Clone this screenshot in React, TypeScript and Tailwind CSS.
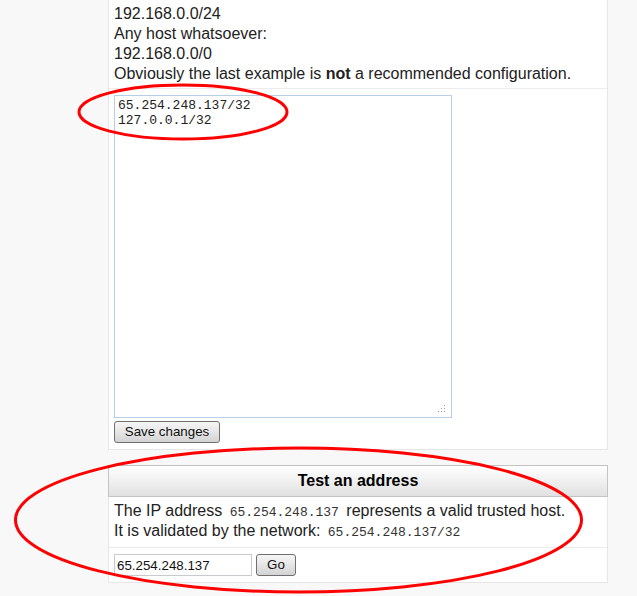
import React from "react";

const sans = "font-['Liberation_Sans',Arial,sans-serif]";
const mono = "font-['Liberation_Mono','Courier_New',monospace]";

const Btn = ({ children, className }: { children: React.ReactNode; className: string }) => (
  <button
    className={`h-[22px] rounded-[3px] border border-[#707070] bg-linear-to-b from-[#f6f6f6] via-[#e6e6e6] to-[#d3d3d3] text-[13.33px] leading-[18px] text-[#111] ${className}`}
  >
    {children}
  </button>
);

const Grip = () => (
  <svg className="absolute right-[5px] bottom-[4px]" width="9" height="9" viewBox="0 0 9 9">
    <rect x="7" y="1" width="1" height="1" fill="#9a9a9a" />
    <rect x="4" y="4" width="1" height="1" fill="#9a9a9a" />
    <rect x="7" y="4" width="1" height="1" fill="#9a9a9a" />
    <rect x="1" y="7" width="1" height="1" fill="#9a9a9a" />
    <rect x="4" y="7" width="1" height="1" fill="#9a9a9a" />
    <rect x="7" y="7" width="1" height="1" fill="#9a9a9a" />
  </svg>
);

export default function App() {
  return (
    <div className={`relative min-h-[596px] bg-[#f8f8f8] text-[#222] ${sans}`}>
      <div className="pl-[108px]">
        {/* allowed hosts settings */}
        <div className="w-[500px] border-x border-b border-[#e6e6e6] bg-white">
          <div className="border-b border-[#ececec] px-[5px] pt-[4px] pb-[4px] text-[16px] leading-[20px]">
            <div>192.168.0.0/24</div>
            <div>Any host whatsoever:</div>
            <div>192.168.0.0/0</div>
            <div>
              Obviously the last example is <b>not</b> a recommended configuration.
            </div>
          </div>
          <div className="px-[5px] pt-[6px] pb-[6px]">
            <div className="relative h-[323px] w-[338px] border border-[#b4cfe7] bg-white">
              <textarea
                readOnly
                defaultValue={"65.254.248.137/32\n127.0.0.1/32"}
                className={`h-full w-full resize-none px-[3px] pt-[2px] text-[13px] leading-[15px] text-[#222] outline-none ${mono}`}
              />
              <Grip />
            </div>
            <Btn className="mt-[3px] w-[106px]">Save changes</Btn>
          </div>
        </div>

        {/* test an address */}
        <div className="mt-[15px] w-[500px] border-x border-b border-[#e6e6e6] bg-white">
          <div className="-mx-px flex h-[32px] items-center justify-center border border-[#c4c4c4] bg-linear-to-b from-white to-[#e1e1e1] text-[16px] font-bold text-black">
            Test an address
          </div>
          <div className="border-b border-[#ececec] px-[5px] pt-[4px] pb-[6px] text-[16px] leading-[20px]">
            <div className="h-[20px]">
              The IP address{" "}
              <code className={`px-[3px] text-[13px] leading-none text-[#333] ${mono}`}>65.254.248.137</code>{" "}
              represents a valid trusted host.
            </div>
            <div className="h-[20px]">
              It is validated by the network:{" "}
              <code className={`px-[3px] text-[13px] leading-none text-[#333] ${mono}`}>65.254.248.137/32</code>
            </div>
          </div>
          <div className="flex items-center px-[5px] pt-[6px] pb-[6px]">
            <input
              readOnly
              defaultValue="65.254.248.137"
              className="h-[22px] w-[138px] border border-[#c8cacf] bg-white px-[2px] text-[13.33px] text-[#111] outline-none"
            />
            <Btn className="ml-[4px] w-[40px]">Go</Btn>
          </div>
        </div>
      </div>

      {/* red annotations */}
      <svg className="pointer-events-none absolute inset-0" width="637" height="596">
        <ellipse cx="183" cy="112" rx="104" ry="27" fill="none" stroke="#f00" strokeWidth="3" />
        <ellipse cx="298.5" cy="520" rx="283" ry="72" fill="none" stroke="#f00" strokeWidth="3" />
      </svg>
    </div>
  );
}
